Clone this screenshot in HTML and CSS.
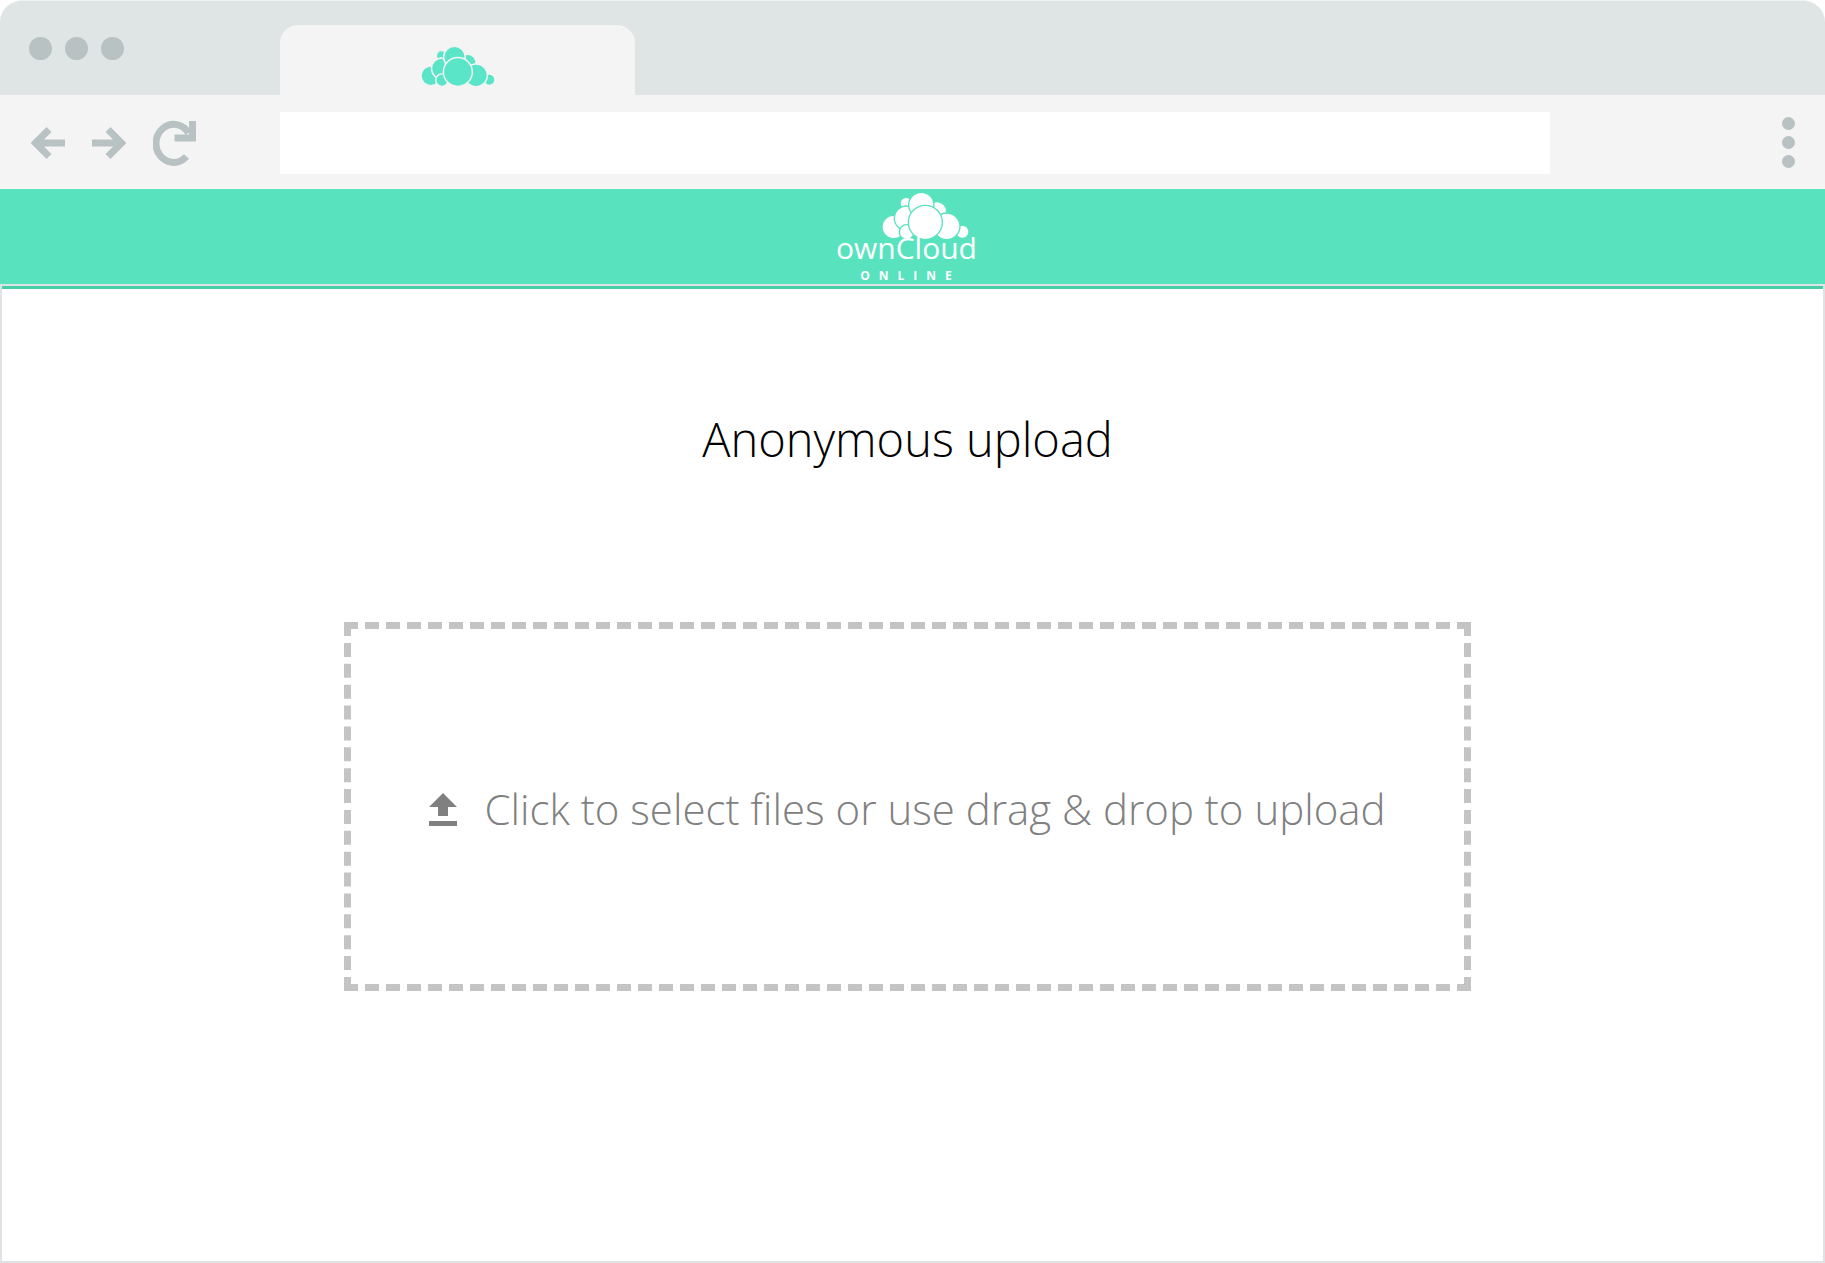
FILE: index.html
```html
<!DOCTYPE html>
<html lang="en">
<head>
  <meta charset="UTF-8">
  <meta name="viewport" content="width=device-width, initial-scale=1.0">
  <title>Anonymous upload</title>
  <link rel="stylesheet" href="styles.css">
</head>
<body>
  <svg class="defs" aria-hidden="true">
    <symbol id="cloud" viewBox="180 36 261 144">
      <circle cx="421" cy="155" r="20"/>
      <circle cx="345" cy="94" r="29"/>
      <circle cx="252" cy="70" r="18"/>
      <circle cx="215" cy="141" r="35"/>
      <circle cx="254" cy="115" r="37"/>
      <circle cx="374" cy="139" r="40"/>
      <circle cx="298" cy="75" r="38"/>
      <circle cx="254" cy="156" r="22"/>
      <circle cx="310" cy="127" r="51"/>
    </symbol>
  </svg>

  <div class="tabbar">
    <div class="dots">
      <span></span>
      <span></span>
      <span></span>
    </div>
    <div class="tab">
      <svg class="favicon"><use href="#cloud"/></svg>
    </div>
  </div>

  <div class="toolbar">
    <div class="nav">
      <button type="button" aria-label="Back">
        <svg width="34" height="32" viewBox="0 0 34 32"><path d="M34 16H5M18 2.500L4.500 16L18 29.500"/></svg>
      </button>
      <button type="button" aria-label="Forward">
        <svg width="34" height="32" viewBox="0 0 34 32"><path d="M0 16H29M16 2.500L29.500 16L16 29.500"/></svg>
      </button>
      <button type="button" aria-label="Reload">
        <svg width="43" height="46" viewBox="0 0 43 46"><path d="M33.500 36.500A17.700 19 0 1 1 35.500 13M39.500 1V18H21.500"/></svg>
      </button>
    </div>
    <input class="address" type="text" aria-label="Address">
    <button class="menu" type="button" aria-label="Menu">
      <span></span>
      <span></span>
      <span></span>
    </button>
  </div>

  <header class="header">
    <div class="logo">
      <svg class="logo-cloud"><use href="#cloud"/></svg>
      <span class="logo-name">ownCloud</span>
      <span class="logo-sub">ONLINE</span>
    </div>
  </header>

  <main class="content">
    <h1>Anonymous upload</h1>
    <label class="dropzone">
      <input type="file" multiple>
      <svg width="28" height="33" viewBox="0 0 28 33"><path d="M14 0L28 14H19V23H9V14H0ZM0 28H28V33H0Z"/></svg>
      <span>Click to select files or use drag &amp; drop to upload</span>
    </label>
  </main>
</body>
</html>
```
FILE: styles.css
```css
* {margin: 0; padding: 0; box-sizing: border-box;}
body {
  display: flex;
  flex-direction: column;
  min-height: 100vh;
  background: #fff;
  font-family: "Open Sans", "Liberation Sans", sans-serif;
}
button {
  border: 0;
  background: none;
  cursor: pointer;
}
svg {display: block;}
.defs {
  position: absolute;
  width: 0;
  height: 0;
}

/* tabs */
.tabbar {
  display: flex;
  height: 95px;
  background: #dfe4e4;
  border-top: 1px solid #eef1f1;
  border-radius: 22px 22px 0 0;
}
.dots {
  display: flex;
  gap: 13px;
  width: 280px;
  padding: 36px 0 0 29px;
}
.dots span {
  width: 23px;
  height: 23px;
  border-radius: 50%;
  background: #b8c2c3;
}
.tab {
  display: flex;
  justify-content: center;
  width: 355px;
  margin-top: 24px;
  padding-top: 21px;
  background: #f4f4f4;
  border-radius: 18px 18px 0 0;
}
.favicon {
  width: 74px;
  height: 41px;
  fill: #5be5c8;
  stroke: #f4f4f4;
  stroke-width: 5;
}

/* toolbar */
.toolbar {
  display: flex;
  align-items: center;
  height: 94px;
  padding-top: 1px;
  background: #f4f4f4;
}
.nav {
  display: flex;
  align-items: center;
  gap: 27px;
  width: 280px;
  padding-left: 31px;
}
.nav svg {
  fill: none;
  stroke: #b8c2c3;
  stroke-width: 7;
}
.address {
  flex: 1;
  min-width: 0;
  height: 62px;
  margin-right: 232px;
  padding: 0 16px;
  border: 0;
  background: #fff;
  font: inherit;
  font-size: 24px;
}
.menu {
  display: flex;
  flex-direction: column;
  gap: 6px;
  margin-right: 30px;
}
.menu span {
  width: 13px;
  height: 13px;
  border-radius: 50%;
  background: #b8c2c3;
}

/* green header */
.header {
  display: flex;
  justify-content: center;
  padding: 3px 12px 0 0;
  background: #58e3be;
  color: #fff;
}
.logo {
  display: flex;
  flex-direction: column;
  align-items: center;
}
.logo-cloud {
  align-self: flex-end;
  width: 87px;
  height: 48px;
  margin-right: 8px;
  fill: #fff;
  stroke: #58e3be;
  stroke-width: 4;
}
.logo-name {
  font-size: 30px;
  font-weight: 400;
  line-height: 16px;
}
.logo-sub {
  margin-top: 12px;
  padding-left: 8px;
  font-size: 12px;
  font-weight: 700;
  line-height: 16px;
  letter-spacing: 9px;
}

/* page */
.content {
  flex: 1;
  display: flex;
  flex-direction: column;
  align-items: center;
  padding: 121px 10px 40px 0;
  border: 2px solid #dfe3e3;
  box-shadow: inset 0 3px #46cfa6;
}
h1 {
  margin-bottom: 151px;
  color: #000;
  font-size: 47px;
  font-weight: 300;
  line-height: 64px;
}
.dropzone {
  display: flex;
  align-items: center;
  justify-content: center;
  gap: 27px;
  width: 100%;
  max-width: 1127px;
  height: 369px;
  padding-top: 5px;
  border: 7px dashed #c4c4c4;
  color: #808080;
  font-size: 42px;
  font-weight: 300;
  line-height: 60px;
  cursor: pointer;
}
.dropzone svg {fill: #808080;}
.dropzone input {
  position: absolute;
  width: 1px;
  height: 1px;
  opacity: 0;
}
```
